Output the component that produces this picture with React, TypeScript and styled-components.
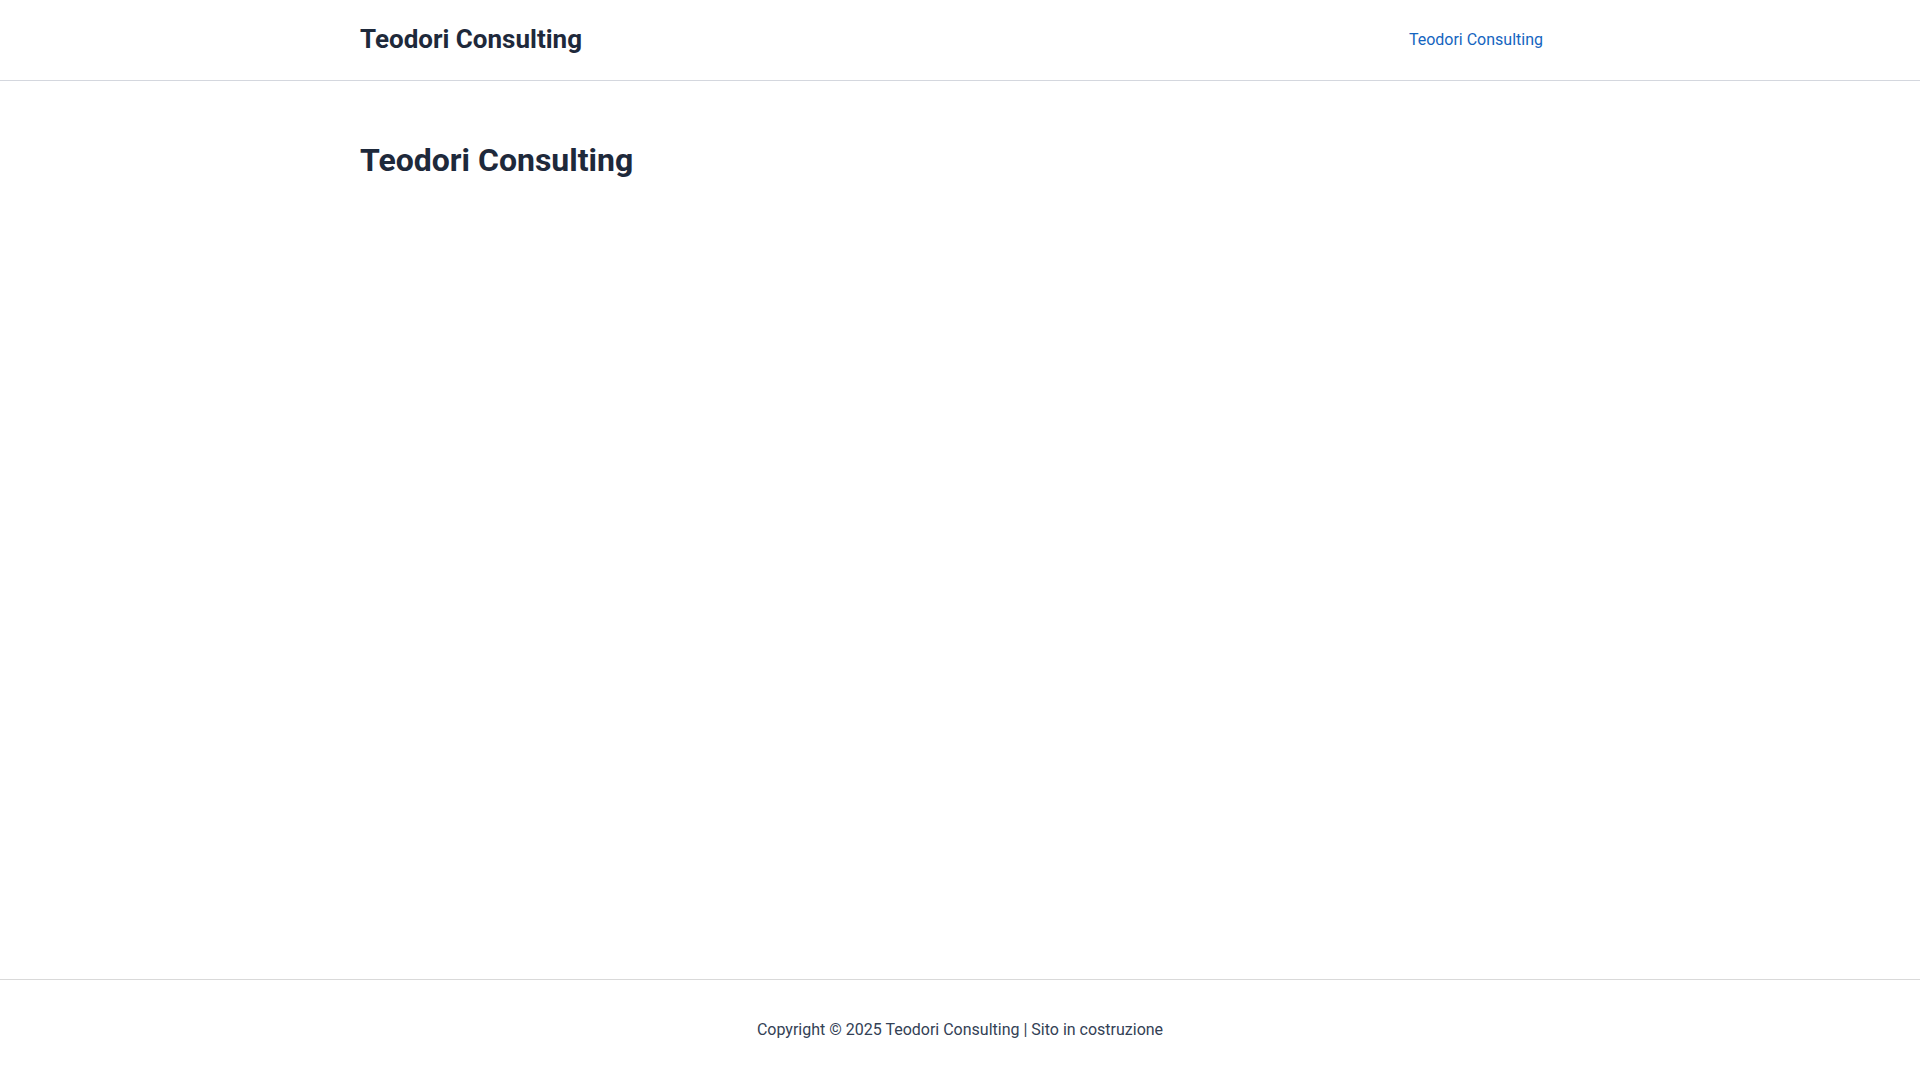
import React from 'react'
import styled, { createGlobalStyle } from 'styled-components'

const GlobalStyle = createGlobalStyle`
  html, body {
    margin: 0;
    padding: 0;
    background: #ffffff;
  }
  body {
    font-family: Roboto, 'Liberation Sans', sans-serif;
    color: #1e293b;
  }
  * {
    box-sizing: border-box;
  }
`

const Page = styled.div`
  min-height: 100vh;
  display: flex;
  flex-direction: column;
`

const Header = styled.header`
  height: 81px;
  border-bottom: 1px solid #d4d7de;
`

const Container = styled.div`
  width: 1200px;
  margin: 0 auto;
`

const HeaderInner = styled(Container)`
  height: 80px;
  padding-bottom: 2px;
  display: flex;
  align-items: center;
  justify-content: space-between;
`

const Logo = styled.a`
  font-size: 26px;
  font-weight: 700;
  color: #1e293b;
  text-decoration: none;
`

const Nav = styled.nav`
  display: flex;
  align-items: center;
  padding-right: 17px;
`

const NavLink = styled.a`
  font-size: 16px;
  color: #1565c0;
  text-decoration: none;
`

const Main = styled.main`
  flex: 1;
  padding-top: 59px;
`

const Title = styled.h1`
  margin: 0;
  font-size: 32px;
  font-weight: 700;
  line-height: 1.25;
  color: #1e293b;
`

const Footer = styled.footer`
  height: 101px;
  padding-bottom: 2px;
  border-top: 1px solid #d9d9d9;
  display: flex;
  align-items: center;
  justify-content: center;
`

const FooterText = styled.p`
  margin: 0;
  font-size: 16px;
  color: #334155;
`

export default function App() {
  return (
    <Page>
      <GlobalStyle />
      <Header>
        <HeaderInner>
          <Logo href="#">Teodori Consulting</Logo>
          <Nav>
            <NavLink href="#">Teodori Consulting</NavLink>
          </Nav>
        </HeaderInner>
      </Header>
      <Main>
        <Container>
          <Title>Teodori Consulting</Title>
        </Container>
      </Main>
      <Footer>
        <FooterText>Copyright © 2025 Teodori Consulting | Sito in costruzione</FooterText>
      </Footer>
    </Page>
  )
}
